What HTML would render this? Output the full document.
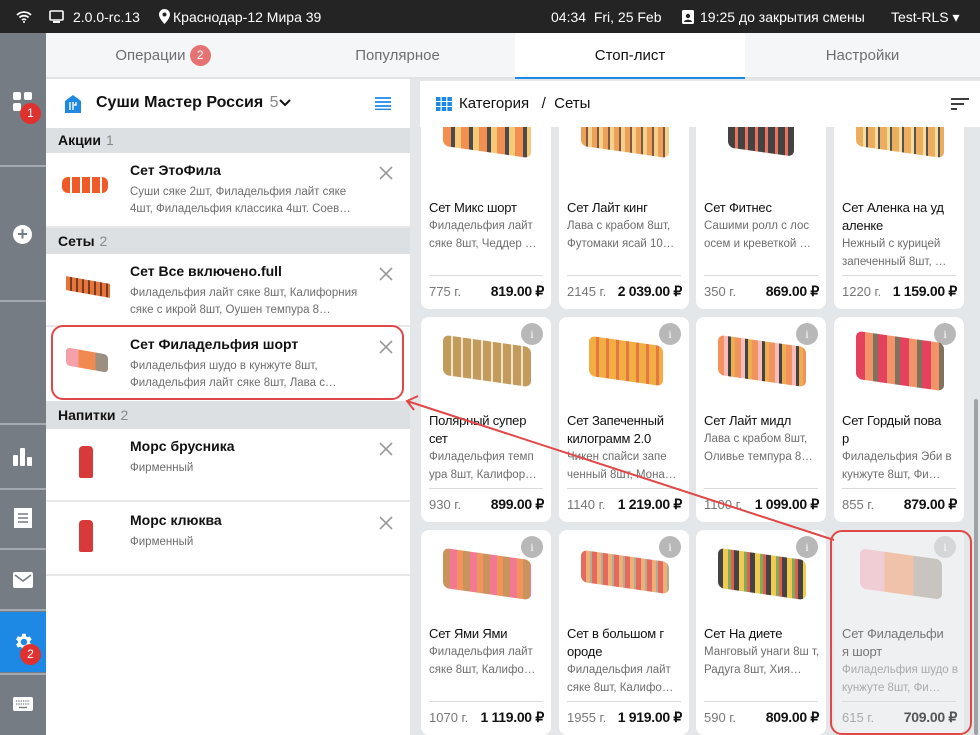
<!DOCTYPE html>
<html><head><meta charset="utf-8"><style>
*{box-sizing:border-box;margin:0;padding:0}
body{width:980px;height:735px;overflow:hidden;font-family:"Liberation Sans","Noto Sans CJK SC",sans-serif;background:#e4e7ea;position:relative}
.abs{position:absolute}
.top{left:0;top:0;width:980px;height:33px;background:#242424;color:#fff;font-size:14px}
.top span{position:absolute;top:9px;white-space:nowrap}
.side{left:0;top:33px;width:46px;height:702px;background:#767c83}
.sep{position:absolute;left:0;width:46px;height:2px;background:#a5aab0}
.tabs{left:46px;top:33px;width:934px;height:46px;background:#f5f6f7;border-bottom:2px solid #e1e3e5}
.tab{position:absolute;top:0;height:44px;line-height:46px;text-align:center;font-size:15px;color:#6b6f73}
.left{left:46px;top:79px;width:364px;height:656px;background:#fff}
.cat{position:absolute;left:0;width:364px;background:#dde0e3;font-size:14px;font-weight:bold;color:#111;padding-left:12px}
.cat i{font-style:normal;font-weight:normal;color:#888;margin-left:5px}
.item{position:absolute;left:0;width:364px;border-bottom:2px solid #e6e8ea}
.item b{position:absolute;left:84px;top:9px;font-size:14px;color:#111}
.item p{position:absolute;left:84px;top:31px;width:240px;font-size:11.5px;line-height:17px;color:#6e6e6e;display:-webkit-box;-webkit-line-clamp:2;-webkit-box-orient:vertical;overflow:hidden}
.x{position:absolute;right:16px;top:12px;width:16px;height:16px}
.card{position:absolute;width:130px;height:205px;background:#fff;border-radius:8px}
.card .n{position:absolute;left:8px;top:95px;width:122px;font-size:13px;line-height:18px;color:#111;letter-spacing:-0.2px}
.card .d{position:absolute;left:8px;top:113px;width:118px;font-size:11.5px;line-height:18px;color:#6e6e6e;display:-webkit-box;-webkit-line-clamp:2;-webkit-box-orient:vertical;overflow:hidden}
.card .hr{position:absolute;left:8px;right:8px;top:171px;height:1px;background:#d8dadc}
.card .w{position:absolute;left:8px;top:180px;font-size:13px;color:#777}
.card .pr{position:absolute;right:7px;top:179px;font-size:14px;font-weight:bold;color:#111;letter-spacing:-0.3px}
.card .i{position:absolute;right:8px;top:6px;width:22px;height:22px;border-radius:50%;background:#b8b8b8;color:#fff;font-size:12px;text-align:center;line-height:22px;font-family:"Liberation Serif",serif}
.sushi{position:absolute;left:22px;top:16px;width:88px;height:40px;border-radius:6px;transform:skewY(8deg);opacity:.85}
</style></head><body>
<div class="abs top">
<svg class="abs" style="left:16px;top:11px" width="16" height="12" viewBox="0 0 16 12"><path d="M1 4a10 10 0 0 1 14 0M3.5 6.5a6.5 6.5 0 0 1 9 0M6 9a3 3 0 0 1 4 0" stroke="#fff" stroke-width="1.8" fill="none"/><circle cx="8" cy="11" r="1" fill="#fff"/></svg>
<svg class="abs" style="left:49px;top:10px" width="15" height="13"><rect x="1" y="1" width="13" height="9" rx="1" stroke="#fff" stroke-width="1.6" fill="none"/><rect x="4" y="11" width="7" height="2" fill="#fff"/></svg>
<span style="left:73px">2.0.0-rc.13</span>
<svg class="abs" style="left:159px;top:9px" width="11" height="15" viewBox="0 0 11 15"><path d="M5.5 0a5.5 5.5 0 0 0-5.5 5.5c0 4 5.5 9.5 5.5 9.5s5.5-5.5 5.5-9.5A5.5 5.5 0 0 0 5.5 0z" fill="#fff"/><circle cx="5.5" cy="5.5" r="2" fill="#242424"/></svg>
<span style="left:173px">Краснодар-12 Мира 39</span>
<span style="left:551px">04:34&nbsp; Fri, 25 Feb</span>
<svg class="abs" style="left:682px;top:10px" width="12" height="14"><rect width="12" height="14" rx="1.5" fill="#fff"/><circle cx="6" cy="6" r="2.2" fill="#242424"/><path d="M2 12c0-3 8-3 8 0z" fill="#242424"/></svg>
<span style="left:700px">19:25 до закрытия смены</span>
<span style="left:891px">Test-RLS ▾</span>
</div>
<div class="abs side">
<div class="sep" style="top:132px"></div><div class="sep" style="top:267px"></div><div class="sep" style="top:390px"></div><div class="sep" style="top:455px"></div><div class="sep" style="top:515px"></div><div class="sep" style="top:576px"></div><div class="sep" style="top:640px"></div>
<svg class="abs" style="left:13px;top:59px" width="20" height="20"><rect x="0" y="0" width="8" height="8" rx="2" fill="#fff"/><rect x="11" y="0" width="8" height="8" rx="2" fill="#fff"/><rect x="0" y="11" width="8" height="8" rx="2" fill="#fff"/></svg>
<div class="abs" style="left:20px;top:70px;width:21px;height:21px;border-radius:50%;background:#e03131;color:#fff;font-size:12px;text-align:center;line-height:21px">1</div>
<div class="abs" style="left:13px;top:192px;width:19px;height:19px;border-radius:50%;background:#fff;color:#767c83;font-size:18px;line-height:19px;text-align:center;font-weight:bold">+</div>
<svg class="abs" style="left:13px;top:414px" width="20" height="20"><rect x="0" y="8" width="5" height="11" rx="1" fill="#fff"/><rect x="7" y="1" width="5" height="18" rx="1" fill="#fff"/><rect x="14" y="10" width="5" height="9" rx="1" fill="#fff"/></svg>
<svg class="abs" style="left:14px;top:475px" width="18" height="20"><rect width="18" height="20" fill="#fff"/><path d="M4 6h10M4 10h10M4 14h10" stroke="#767c83" stroke-width="1.6"/></svg>
<svg class="abs" style="left:13px;top:539px" width="20" height="16"><rect width="20" height="16" rx="2" fill="#fff"/><path d="M2 3l8 6 8-6" stroke="#767c83" stroke-width="1.6" fill="none"/></svg>
<div class="abs" style="left:0;top:579px;width:46px;height:60px;background:#1e88e5"></div>
<svg class="abs" style="left:12px;top:598px" width="22" height="22" viewBox="0 0 24 24"><path fill="#fff" d="M19.4 13a7.5 7.5 0 0 0 0-2l2.1-1.6-2-3.5-2.5 1a7 7 0 0 0-1.700-1L15 3h-4l-.4 2.7a7 7 0 0 0-1.7 1l-2.5-1-2 3.5L6.6 11a7.5 7.5 0 0 0 0 2l-2.1 1.6 2 3.5 2.5-1a7 7 0 0 0 1.7 1L11 21h4l.4-2.7a7 7 0 0 0 1.7-1l2.5 1 2-3.5zM13 15.5a3.5 3.5 0 1 1 0-7 3.5 3.5 0 0 1 0 7z"/></svg>
<div class="abs" style="left:20px;top:611px;width:21px;height:21px;border-radius:50%;background:#e03131;color:#fff;font-size:12px;text-align:center;line-height:21px">2</div>
<svg class="abs" style="left:13px;top:664px" width="20" height="14"><rect width="20" height="14" rx="2" fill="#fff"/><path d="M3 4h14M3 7h14" stroke="#767c83" stroke-width="1.3" stroke-dasharray="1.3 1"/><path d="M6 10.5h8" stroke="#767c83" stroke-width="1.4"/></svg>
</div>
<div class="abs tabs">
<div class="tab" style="left:0;width:234px">Операции <span style="display:inline-block;width:21px;height:21px;border-radius:50%;background:#e57373;color:#fff;font-size:12px;line-height:21px;vertical-align:1px">2</span></div>
<div class="tab" style="left:234px;width:235px">Популярное</div>
<div class="tab" style="left:469px;width:230px;background:#fff;color:#111;border-bottom:2px solid #1e88e5;height:46px">Стоп-лист</div>
<div class="tab" style="left:699px;width:235px">Настройки</div>
</div>
<div class="abs left">
<svg class="abs" style="left:19px;top:16px" width="16" height="18"><path d="M0 6L8 0l8 6v12H0z" fill="#1e88e5"/><path d="M5 7v8M8 7v8M11 7v3h-2" stroke="#fff" stroke-width="1.4" fill="none"/></svg>
<div class="abs" style="left:50px;top:15px;font-size:16px;font-weight:bold;color:#111;white-space:nowrap">Суши Мастер Россия <span style="font-weight:normal;color:#888;margin-left:2px">5</span></div>
<svg class="abs" style="left:233px;top:20px" width="12" height="8"><path d="M1 1l5 5 5-5" stroke="#111" stroke-width="2" fill="none"/></svg>
<svg class="abs" style="left:329px;top:18px" width="16" height="13"><path d="M0 1h16M0 5h16M0 9h16M0 12.5h16" stroke="#1e88e5" stroke-width="1.8"/></svg>
<div class="cat" style="top:49px;height:25px;line-height:25px">Акции<i>1</i></div>
<div class="item" style="top:74px;height:75px"><div class="abs" style="left:16px;top:24px;width:46px;height:16px;background:repeating-linear-gradient(90deg,#f05a28 0 8px,#fff 8px 10px);border-radius:6px"></div><b>Сет ЭтоФила</b><p>Суши сяке 2шт, Филадельфия лайт сяке 4шт, Филадельфия классика 4шт. Соев…</p><svg class="x"><path d="M2 2l12 12M14 2L2 14" stroke="#999" stroke-width="1.6"/></svg></div>
<div class="cat" style="top:149px;height:26px;line-height:26px">Сеты<i>2</i></div>
<div class="item" style="top:175px;height:73px"><div class="abs" style="left:20px;top:26px;width:44px;height:14px;background:repeating-linear-gradient(90deg,#e5753a 0 4px,#7a3a20 4px 6px);transform:skewY(10deg)"></div><b>Сет Все включено.full</b><p>Филадельфия лайт сяке 8шт, Калифорния сяке с икрой 8шт, Оушен темпура 8…</p><svg class="x"><path d="M2 2l12 12M14 2L2 14" stroke="#999" stroke-width="1.6"/></svg></div>
<div class="item" style="top:248px;height:74px;border:none"><div class="abs" style="left:20px;top:24px;width:42px;height:18px;background:linear-gradient(90deg,#f3a0a8 0 30%,#f08a50 30% 70%,#9a8f80 70%);border-radius:4px;transform:skewY(10deg)"></div><b>Сет Филадельфия шорт</b><p>Филадельфия шудо в кунжуте 8шт, Филадельфия лайт сяке 8шт, Лава с крабом…</p><svg class="x"><path d="M2 2l12 12M14 2L2 14" stroke="#999" stroke-width="1.6"/></svg></div>
<div class="abs" style="left:5px;top:246px;width:353px;height:75px;border:2px solid #e04848;border-radius:12px"></div>
<div class="cat" style="top:322px;height:28px;line-height:28px">Напитки<i>2</i></div>
<div class="item" style="top:350px;height:73px"><div class="abs" style="left:33px;top:17px;width:14px;height:32px;background:#d83a3a;border-radius:4px 4px 2px 2px"></div><b>Морс брусника</b><p>Фирменный</p><svg class="x"><path d="M2 2l12 12M14 2L2 14" stroke="#999" stroke-width="1.6"/></svg></div>
<div class="item" style="top:424px;height:73px"><div class="abs" style="left:33px;top:17px;width:14px;height:32px;background:#d83a3a;border-radius:4px 4px 2px 2px"></div><b>Морс клюква</b><p>Фирменный</p><svg class="x"><path d="M2 2l12 12M14 2L2 14" stroke="#999" stroke-width="1.6"/></svg></div>
</div>
<div class="abs" style="left:410px;top:79px;width:570px;height:656px;overflow:hidden">
<div class="card" style="left:11px;top:25px"><div class="sushi" style="top:8px;background:repeating-linear-gradient(90deg,#f07a30 0 8px,#2a2a2a 8px 12px,#f5c060 12px 18px)"></div><div class="n">Сет Микс шорт</div><div class="d">Филадельфия лайт сяке 8шт, Чеддер …</div><div class="hr"></div><div class="w">775 г.</div><div class="pr">819.00 ₽</div></div>
<div class="card" style="left:149px;top:25px"><div class="sushi" style="top:8px;background:repeating-linear-gradient(90deg,#e8903a 0 5px,#6a3a20 5px 7px,#f2c878 7px 11px)"></div><div class="n">Сет Лайт кинг</div><div class="d">Лава с крабом 8шт, Футомаки ясай 10…</div><div class="hr"></div><div class="w">2145 г.</div><div class="pr">2 039.00 ₽</div></div>
<div class="card" style="left:286px;top:25px"><div class="sushi" style="left:32px;width:66px;top:8px;background:repeating-linear-gradient(90deg,#222 0 7px,#e85a40 7px 10px)"></div><div class="n">Сет Фитнес</div><div class="d">Сашими ролл с лос осем и креветкой …</div><div class="hr"></div><div class="w">350 г.</div><div class="pr">869.00 ₽</div></div>
<div class="card" style="left:424px;top:25px"><div class="sushi" style="top:8px;background:repeating-linear-gradient(90deg,#e9a040 0 7px,#f5d890 7px 10px,#333 10px 12px)"></div><div class="n">Сет Аленка на уд<br>аленке</div><div class="d" style="top:131px">Нежный с курицей запеченный 8шт, …</div><div class="hr"></div><div class="w">1220 г.</div><div class="pr">1 159.00 ₽</div></div>

<div class="card" style="left:11px;top:238px"><div class="i">i</div><div class="sushi" style="top:24px;background:repeating-linear-gradient(90deg,#b88a40 0 8px,#f0e0c0 8px 10px)"></div><div class="n">Полярный супер<br>сет</div><div class="d" style="top:131px">Филадельфия темп ура 8шт, Калифор…</div><div class="hr"></div><div class="w">930 г.</div><div class="pr">899.00 ₽</div></div>
<div class="card" style="left:149px;top:238px"><div class="i">i</div><div class="sushi" style="left:30px;width:74px;top:24px;background:repeating-linear-gradient(90deg,#f0a020 0 7px,#e06020 7px 10px)"></div><div class="n">Сет Запеченный<br>килограмм 2.0</div><div class="d" style="top:131px">Чикен спайси запе ченный 8шт, Мона…</div><div class="hr"></div><div class="w">1140 г.</div><div class="pr">1 219.00 ₽</div></div>
<div class="card" style="left:286px;top:238px"><div class="i">i</div><div class="sushi" style="top:24px;background:repeating-linear-gradient(90deg,#f08040 0 6px,#f5b0b0 6px 10px,#222 10px 13px,#e8a030 13px 17px)"></div><div class="n">Сет Лайт мидл</div><div class="d">Лава с крабом 8шт, Оливье темпура 8…</div><div class="hr"></div><div class="w">1100 г.</div><div class="pr">1 099.00 ₽</div></div>
<div class="card" style="left:424px;top:238px"><div class="i">i</div><div class="sushi" style="top:20px;height:48px;background:repeating-linear-gradient(90deg,#e02040 0 9px,#f08050 9px 17px,#6a5a40 17px 22px)"></div><div class="n">Сет Гордый пова<br>р</div><div class="d" style="top:131px">Филадельфия Эби в кунжуте 8шт, Фи…</div><div class="hr"></div><div class="w">855 г.</div><div class="pr">879.00 ₽</div></div>

<div class="card" style="left:11px;top:451px"><div class="i">i</div><div class="sushi" style="top:24px;background:repeating-linear-gradient(90deg,#c08040 0 7px,#f06080 7px 14px,#f08040 14px 20px)"></div><div class="n">Сет Ями Ями</div><div class="d">Филадельфия лайт сяке 8шт, Калифо…</div><div class="hr"></div><div class="w">1070 г.</div><div class="pr">1 119.00 ₽</div></div>
<div class="card" style="left:149px;top:451px"><div class="i">i</div><div class="sushi" style="top:26px;height:32px;background:repeating-linear-gradient(90deg,#e05040 0 5px,#f0a060 5px 9px,#a0a080 9px 11px)"></div><div class="n">Сет в большом г<br>ороде</div><div class="d" style="top:131px">Филадельфия лайт сяке 8шт, Калифо…</div><div class="hr"></div><div class="w">1955 г.</div><div class="pr">1 919.00 ₽</div></div>
<div class="card" style="left:286px;top:451px"><div class="i">i</div><div class="sushi" style="top:24px;background:repeating-linear-gradient(90deg,#222 0 5px,#f0c030 5px 10px,#60a040 10px 13px,#e04030 13px 16px)"></div><div class="n">Сет На диете</div><div class="d">Манговый унаги 8ш т, Радуга 8шт, Хия…</div><div class="hr"></div><div class="w">590 г.</div><div class="pr">809.00 ₽</div></div>
<div class="card" style="left:424px;top:451px;background:#eef0f2"><div class="i" style="background:#d4d6d8">i</div><div class="sushi" style="left:26px;width:82px;top:24px;opacity:.45;background:linear-gradient(90deg,#f3a0b0 0 30%,#f08a50 30% 65%,#9a8f80 65%)"></div><div class="n" style="color:#777">Сет Филадельфи<br>я шорт</div><div class="d" style="top:131px;color:#aaa">Филадельфия шудо в кунжуте 8шт, Фи…</div><div class="hr"></div><div class="w" style="color:#aaa">615 г.</div><div class="pr" style="color:#555">709.00 ₽</div></div>

<div class="abs" style="left:10px;top:2px;width:560px;height:46px;background:#fff"></div>
<svg class="abs" style="left:26px;top:18px" width="16" height="14"><g fill="#1e88e5"><rect x="0" y="0" width="4.5" height="4"/><rect x="5.7" y="0" width="4.5" height="4"/><rect x="11.4" y="0" width="4.5" height="4"/><rect x="0" y="5" width="4.5" height="4"/><rect x="5.7" y="5" width="4.5" height="4"/><rect x="11.4" y="5" width="4.5" height="4"/><rect x="0" y="10" width="4.5" height="4"/><rect x="5.7" y="10" width="4.5" height="4"/><rect x="11.4" y="10" width="4.5" height="4"/></g></svg>
<div class="abs" style="left:49px;top:16px;font-size:15px;color:#111;white-space:nowrap">Категория &nbsp;&nbsp;/&nbsp; Сеты</div>
<svg class="abs" style="left:541px;top:19px" width="18" height="13"><path d="M0 1h18M0 6h13M0 11h6" stroke="#222" stroke-width="1.8"/></svg>
<div class="abs" style="left:564px;top:320px;width:4px;height:336px;background:#9ea2a6;border-radius:2px"></div>
</div>
<div class="abs" style="left:830px;top:530px;width:142px;height:205px;border:2px solid #e04848;border-radius:12px"></div>
<svg class="abs" style="left:0;top:0" width="980" height="735"><path d="M834 540L407 401" stroke="#e04848" stroke-width="2" fill="none"/><path d="M418 396l-11 5 7 9" stroke="#e04848" stroke-width="2" fill="none"/></svg>
</body></html>
